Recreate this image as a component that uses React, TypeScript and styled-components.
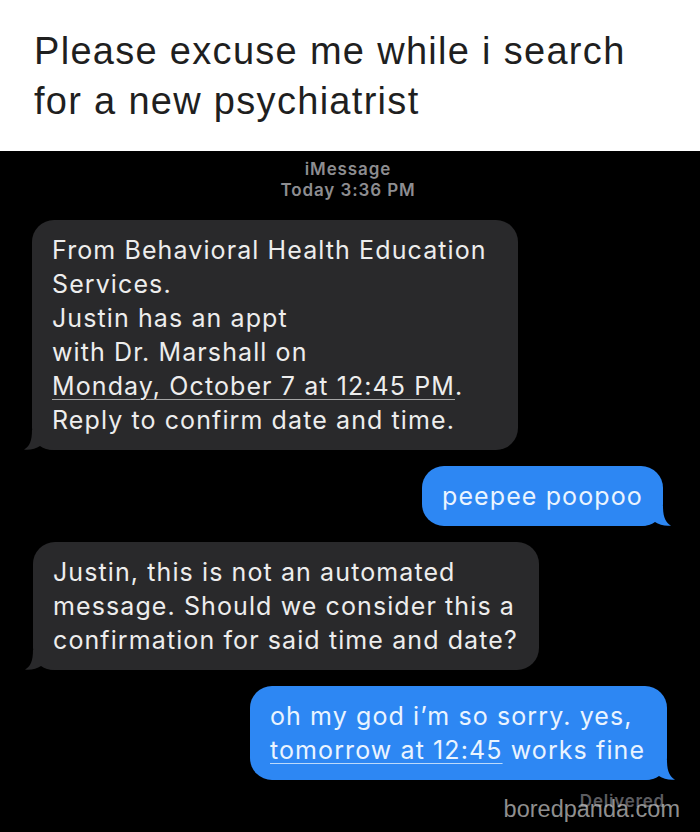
import React from 'react';
import styled, { createGlobalStyle } from 'styled-components';

const GlobalStyle = createGlobalStyle`
  html, body {
    margin: 0;
    padding: 0;
    background: #000;
  }
  body {
    width: 700px;
    height: 832px;
    overflow: hidden;
  }
`;

const Page = styled.div`
  width: 700px;
  height: 832px;
  display: flex;
  flex-direction: column;
`;

const Caption = styled.h1`
  margin: 0;
  background: #fff;
  color: #1f1f1f;
  font-family: "Liberation Sans", Arial, sans-serif;
  font-weight: 400;
  font-size: 38px;
  line-height: 50px;
  letter-spacing: 1.3px;
  padding: 26px 34px 25px;
`;

const Screen = styled.div`
  flex: 1;
  position: relative;
  background: #000;
  display: flex;
  flex-direction: column;
  gap: 16px;
  padding-top: 8px;
  font-family: Inter, "Noto Sans", sans-serif;
`;

const Stamp = styled.div`
  text-align: center;
  color: #8d8d90;
  font-size: 17px;
  line-height: 21px;
  font-weight: 600;
  letter-spacing: 0.9px;
  padding-right: 4px;
  margin-bottom: 3px;
`;

const Row = styled.div<{ $out?: boolean; $inset: number }>`
  display: flex;
  justify-content: ${(p) => (p.$out ? 'flex-end' : 'flex-start')};
  padding-left: ${(p) => (p.$out ? 0 : p.$inset)}px;
  padding-right: ${(p) => (p.$out ? p.$inset : 0)}px;
`;

const Bubble = styled.div<{ $out?: boolean; $w: number }>`
  position: relative;
  box-sizing: border-box;
  width: ${(p) => p.$w}px;
  padding: 13px 20px;
  border-radius: 22px;
  background: ${(p) => (p.$out ? '#2d87f3' : '#29292b')};
  color: ${(p) => (p.$out ? '#eaf4ff' : '#ededed')};
  font-size: 25px;
  line-height: 34px;
  letter-spacing: 1.1px;
  white-space: nowrap;
`;

const Tail = styled.svg<{ $out?: boolean }>`
  position: absolute;
  bottom: 0;
  width: 30px;
  height: 20px;
  ${(p) => (p.$out ? 'right: -8px; transform: scaleX(-1);' : 'left: -8px;')}
`;

const Link = styled.span<{ $out?: boolean }>`
  text-decoration: underline;
  text-decoration-thickness: 1px;
  text-underline-offset: 4px;
  text-decoration-color: ${(p) => (p.$out ? 'rgba(235,245,255,0.75)' : 'rgba(220,220,220,0.7)')};
`;

const Status = styled.div`
  display: flex;
  justify-content: flex-end;
  padding-right: 35px;
  margin-top: -5px;
  color: #5c5c60;
  font-size: 17px;
  line-height: 20px;
  font-weight: 600;
  letter-spacing: 0.8px;
`;

const Watermark = styled.div`
  position: absolute;
  right: 20px;
  bottom: 10px;
  font-family: "Liberation Sans", Arial, sans-serif;
  font-size: 23.5px;
  line-height: 26px;
  color: rgba(200, 200, 200, 0.72);
`;

function BubbleTail({ out }: { out?: boolean }) {
  return (
    <Tail $out={out} viewBox="0 0 30 20">
      <path
        d="M8 0 C8 11 5.5 16.5 0 19.6 C6 20.4 12 18.6 16 16 C19.5 18.6 24 20 30 20 L30 0 Z"
        fill={out ? '#2d87f3' : '#29292b'}
      />
    </Tail>
  );
}

export default function App() {
  return (
    <Page>
      <GlobalStyle />
      <Caption>
        Please excuse me while i search
        <br />
        for a new psychiatrist
      </Caption>
      <Screen>
        <Stamp>
          iMessage
          <br />
          Today 3:36 PM
        </Stamp>

        <Row $inset={32}>
          <Bubble $w={486}>
            From Behavioral Health Education
            <br />
            Services.
            <br />
            Justin has an appt
            <br />
            with Dr. Marshall on
            <br />
            <Link>Monday, October 7 at 12:45 PM</Link>.
            <br />
            Reply to confirm date and time.
            <BubbleTail />
          </Bubble>
        </Row>

        <Row $out $inset={37}>
          <Bubble $out $w={241}>
            peepee poopoo
            <BubbleTail out />
          </Bubble>
        </Row>

        <Row $inset={33}>
          <Bubble $w={506}>
            Justin, this is not an automated
            <br />
            message. Should we consider this a
            <br />
            confirmation for said time and date?
            <BubbleTail />
          </Bubble>
        </Row>

        <Row $out $inset={33}>
          <Bubble $out $w={417}>
            oh my god i’m so sorry. yes,
            <br />
            <Link $out>tomorrow at 12:45</Link> works fine
            <BubbleTail out />
          </Bubble>
        </Row>

        <Status>Delivered</Status>
        <Watermark>boredpanda.com</Watermark>
      </Screen>
    </Page>
  );
}
